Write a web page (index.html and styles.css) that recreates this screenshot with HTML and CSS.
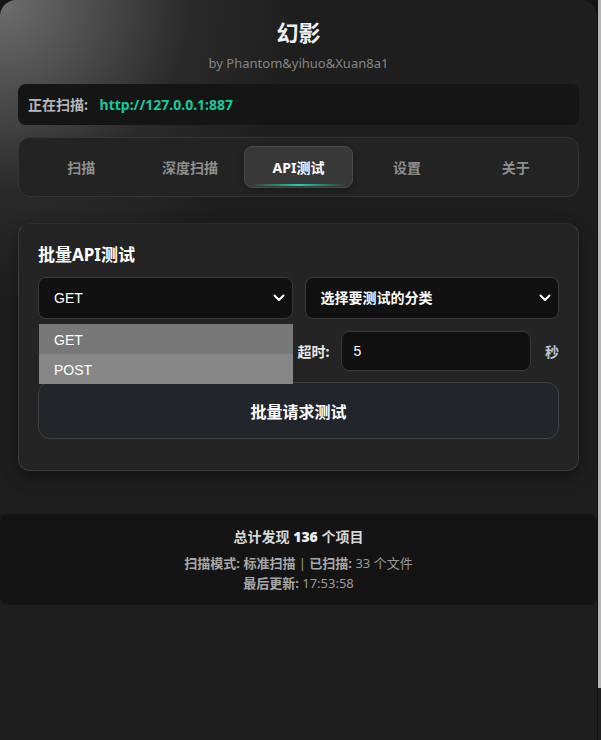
FILE: index.html
```html
<!DOCTYPE html>
<html lang="zh-CN">

<head>
    <meta charset="UTF-8">
    <meta name="viewport" content="width=device-width, initial-scale=1.0">
    <title>幻影</title>
    <link rel="stylesheet" href="styles.css">
</head>

<body>

    <div class="app">
        <div class="main">
            <h1>幻影</h1>
            <div class="subtitle">by Phantom&amp;yihuo&amp;Xuan8a1</div>

            <!-- Current target -->
            <div class="scan-bar">
                <span class="scan-label">正在扫描:</span>
                <span class="scan-url">http://127.0.0.1:887</span>
            </div>

            <!-- Tabs -->
            <div class="tabs">
                <div class="tab">扫描</div>
                <div class="tab">深度扫描</div>
                <div class="tab active">API测试</div>
                <div class="tab">设置</div>
                <div class="tab">关于</div>
            </div>

            <!-- Batch API test -->
            <div class="card">
                <h2>批量API测试</h2>

                <div class="select-row">
                    <div class="select-wrap">
                        <select class="field">
                            <option>GET</option>
                            <option>POST</option>
                        </select>
                        <svg class="chevron" viewBox="0 0 12 8" width="12" height="8">
                            <path d="M1.5 1.5 6 6l4.5-4.5" fill="none" stroke="#fff" stroke-width="2" stroke-linecap="round" stroke-linejoin="round"/>
                        </svg>
                        <!-- open method list -->
                        <ul class="dropdown">
                            <li class="hover">GET</li>
                            <li>POST</li>
                        </ul>
                    </div>
                    <div class="select-wrap">
                        <select class="field cat">
                            <option>选择要测试的分类</option>
                        </select>
                        <svg class="chevron" viewBox="0 0 12 8" width="12" height="8">
                            <path d="M1.5 1.5 6 6l4.5-4.5" fill="none" stroke="#fff" stroke-width="2" stroke-linecap="round" stroke-linejoin="round"/>
                        </svg>
                    </div>
                </div>

                <div class="option-row">
                    <label class="covered">并发数:</label>
                    <input class="field small covered" type="text" value="">
                    <label>超时:</label>
                    <input class="field small" type="text" value="5">
                    <span class="unit">秒</span>
                </div>

                <button class="run-btn">批量请求测试</button>
            </div>
        </div>

        <!-- Stats -->
        <div class="stats">
            <div class="stats-total">总计发现 <b>136</b> 个项目</div>
            <div class="stats-line"><b>扫描模式:</b> <b>标准扫描</b> | <b>已扫描:</b> 33 个文件</div>
            <div class="stats-line"><b>最后更新:</b> 17:53:58</div>
        </div>
    </div>

    <div class="scrollbar">
        <div class="thumb"></div>
    </div>

</body>

</html>
```

FILE: styles.css
```css
/* General */
body {
    margin: 0;
    height: 740px;
    overflow: hidden;
    display: flex;
    background: #141414;
    font-family: "Noto Sans", "Noto Sans CJK SC", sans-serif;
    color: #e6e6e6;
}

.app {
    flex: 1;
    border-radius: 16px 16px 0 0;
    border-right: 1px solid #101010;
    background: radial-gradient(circle at 0 0, #6e6e6e 0, #2a2a2a 190px, #1e1e1e 300px);
}

.scrollbar {
    width: 3px;
    background: #1e1e1e;
}

.thumb {
    height: 688px;
    background: #b4b4b4;
}

.main {
    padding: 16px 18px 0;
}

h1 {
    margin: 0;
    text-align: center;
    font-size: 22px;
    line-height: 32px;
    font-weight: 700;
    color: #f0f0f0;
}

.subtitle {
    margin-top: 5px;
    text-align: center;
    font-size: 13px;
    line-height: 20px;
    color: #858585;
}

/* Scan target */
.scan-bar {
    margin-top: 11px;
    padding: 10px 10px;
    background: #151515;
    border-radius: 8px;
    font-size: 14px;
    line-height: 21px;
    font-weight: 700;
}

.scan-label {
    color: #b8b8b8;
    margin-right: 8px;
}

.scan-url {
    color: #18c99c;
}

/* Tabs */
.tabs {
    margin-top: 12px;
    display: flex;
    padding: 8px;
    background: #232323;
    border: 1px solid #353535;
    border-radius: 12px;
}

.tab {
    flex: 1;
    height: 42px;
    line-height: 42px;
    text-align: center;
    font-size: 14px;
    font-weight: 700;
    color: #8e8e8e;
    border: 1px solid transparent;
    border-radius: 8px;
    box-sizing: border-box;
    position: relative;
}

.tab.active {
    color: #fff;
    background: #383838;
    border-color: #4a4a4a;
    box-shadow: 0 2px 6px rgba(0, 0, 0, 0.3);
}

.tab.active::after {
    content: "";
    position: absolute;
    left: 6px;
    right: 6px;
    bottom: 1px;
    height: 2px;
    border-radius: 2px;
    background: linear-gradient(90deg, rgba(24, 201, 156, 0), #18d4a4 50%, rgba(24, 201, 156, 0));
}

/* Card */
.card {
    margin-top: 26px;
    padding: 19px 19px 31px;
    background: #242424;
    border: 1px solid #3c3c3c;
    border-top-color: #2c2c2c;
    border-radius: 12px;
    box-shadow: 0 6px 16px rgba(0, 0, 0, 0.35);
}

h2 {
    margin: 0;
    font-size: 17px;
    line-height: 24px;
    font-weight: 700;
    color: #fff;
}

.select-row {
    margin-top: 10px;
    display: grid;
    grid-template-columns: 1fr 1fr;
    gap: 12px;
}

.select-wrap {
    position: relative;
}

.field {
    display: block;
    width: 100%;
    box-sizing: border-box;
    background: #111;
    color: #fff;
    border: 1px solid #3a3a3a;
    border-radius: 8px;
    font-family: "Liberation Sans", "Noto Sans CJK SC", sans-serif;
    font-size: 14px;
    outline: none;
}

select.field {
    height: 42px;
    padding: 0 15px;
    appearance: none;
    -webkit-appearance: none;
}

select.cat {
    font-weight: 700;
}

.chevron {
    position: absolute;
    right: 8px;
    top: 17px;
    pointer-events: none;
}

.dropdown {
    position: absolute;
    top: 47px;
    left: 1px;
    right: 0;
    margin: 0;
    padding: 0;
    list-style: none;
    z-index: 5;
    font-family: "Liberation Sans", sans-serif;
    font-size: 14px;
    color: #fff;
}

.dropdown li {
    height: 30px;
    line-height: 32px;
    padding-left: 15px;
    background: #878787;
}

.dropdown li.hover {
    background: #787878;
}

.option-row {
    margin-top: 12px;
    display: flex;
    align-items: center;
    gap: 12px;
    font-size: 14px;
}

.option-row label {
    font-weight: 700;
    color: #e8e8e8;
}

/* hidden behind the open dropdown */
.option-row .covered {
    visibility: hidden;
}

input.field.small {
    flex: 1;
    min-width: 0;
    height: 40px;
    padding: 0 11px;
}

.unit {
    margin-left: 2px;
    color: #b8c4d8;
    font-weight: 700;
}

.run-btn {
    display: block;
    width: 100%;
    margin-top: 11px;
    height: 57px;
    background: #22252a;
    border: 1px solid #3c3f44;
    border-radius: 12px;
    color: #fff;
    font-family: "Noto Sans CJK SC", sans-serif;
    font-size: 16px;
    font-weight: 700;
    cursor: pointer;
}

/* Stats */
.stats {
    margin-top: 43px;
    padding: 13px 0 12px;
    background: #141414;
    border-radius: 8px;
    text-align: center;
}

.stats-total {
    font-size: 14px;
    line-height: 20px;
    font-weight: 700;
    color: #d8d8d8;
}

.stats-total b {
    font-weight: 900;
    color: #f2f2f2;
}

.stats-line {
    margin-top: 7px;
    font-size: 13px;
    line-height: 19px;
    color: #9a9a9a;
}

.stats-line + .stats-line {
    margin-top: 1px;
}

.stats-line b {
    font-weight: 700;
    color: #a8a8a8;
}
```
